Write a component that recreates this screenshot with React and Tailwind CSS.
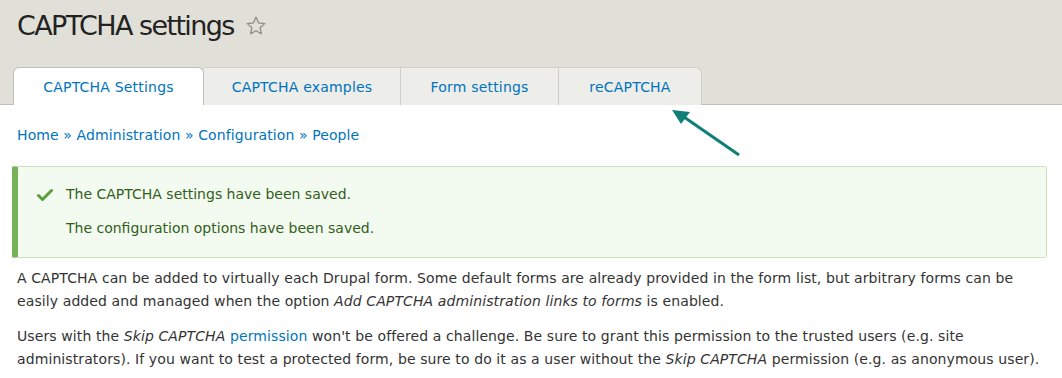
import React from 'react';

const tabs = ['CAPTCHA Settings', 'CAPTCHA examples', 'Form settings', 'reCAPTCHA'];
const tabWidths = ['w-[191px]', 'w-[197px]', 'w-[158px]', 'w-[143px]'];

const App = () => {
  return (
    <div className="relative w-[1062px] h-[378px] overflow-hidden bg-white font-['DejaVu_Sans',sans-serif] text-[#333]">
      {/* header */}
      <div className="bg-[#e0e0d8] border-b border-[#bfbfba]">
        <div className="flex items-center pl-[17px] h-[67px] pb-[17px]">
          <h1 className="text-[27px] leading-none font-normal text-[#222] tracking-[-1.6px]">CAPTCHA settings</h1>
          <svg className="ml-[11px] mt-[1px]" width="22" height="22" viewBox="0 0 24 24" fill="none" stroke="#8c8c80" strokeWidth="1.4" strokeLinejoin="round">
            <path d="M12 2.5l2.9 6.2 6.6.7-5 4.5 1.4 6.6L12 17.2l-5.9 3.3 1.4-6.6-5-4.5 6.6-.7z" />
          </svg>
        </div>
        <div className="flex pl-[13px] h-[38px] mb-[-1px]">
          {tabs.map((t, i) => (
            <div
              key={t}
              className={`${tabWidths[i]} flex items-center justify-center pt-[2px] text-[14px] text-[#0074bd] tracking-[0.2px] border border-b-0 ${
                i === 0
                  ? 'bg-white border-[#bfbfba] rounded-t-[6px] border-b border-b-white'
                  : 'bg-[#ededea] border-[#cfcfc8] border-l-0'
              } ${i === tabs.length - 1 ? 'rounded-tr-[6px]' : ''}`}
            >
              {t}
            </div>
          ))}
        </div>
      </div>

      {/* breadcrumb */}
      <div className="px-[17px] pt-[20px] text-[14px] text-[#0074bd] tracking-[0.1px]">
        <span>Home</span> » <span>Administration</span> » <span>Configuration</span> » <span>People</span>
      </div>

      {/* message */}
      <div className="mx-[12px] mt-[20px] w-[1035px] h-[92px] bg-[#f3faef] border border-[#c9e1bd] border-l-[6px] border-l-[#77b259] rounded-[2px] pl-[19px] pt-[17px] text-[14px] text-[#325e1c]">
        <div className="flex items-center">
          <svg width="16" height="14" viewBox="0 0 16 14" className="mr-[13px]">
            <path d="M1.5 7.5l4 4 9-9" fill="none" stroke="#5b9e3b" strokeWidth="3" strokeLinecap="round" strokeLinejoin="round" />
          </svg>
          <span>The CAPTCHA settings have been saved.</span>
        </div>
        <div className="pl-[29px] mt-[13px]">The configuration options have been saved.</div>
      </div>

      {/* description */}
      <div className="px-[17px] pt-[9px] text-[14px] leading-[23px] tracking-[0.1px] text-[#333]">
        <p>
          A CAPTCHA can be added to virtually each Drupal form. Some default forms are already provided in the form list, but arbitrary forms can be easily added and managed when the option <em>Add CAPTCHA administration links to forms</em> is enabled.
        </p>
        <p className="mt-[12px]">
          Users with the <em>Skip CAPTCHA</em> <span className="text-[#0074bd]">permission</span> won't be offered a challenge. Be sure to grant this permission to the trusted users (e.g. site administrators). If you want to test a protected form, be sure to do it as a user without the <em>Skip CAPTCHA</em> permission (e.g. as anonymous user).
        </p>
      </div>

      {/* annotation arrow */}
      <svg className="absolute left-0 top-0 pointer-events-none" width="1062" height="378">
        <line x1="739" y1="155" x2="684" y2="117" stroke="#0e8078" strokeWidth="3" />
        <path d="M672 110 L690 112 L681 124 Z" fill="#0e8078" />
      </svg>
    </div>
  );
};

export default App;
